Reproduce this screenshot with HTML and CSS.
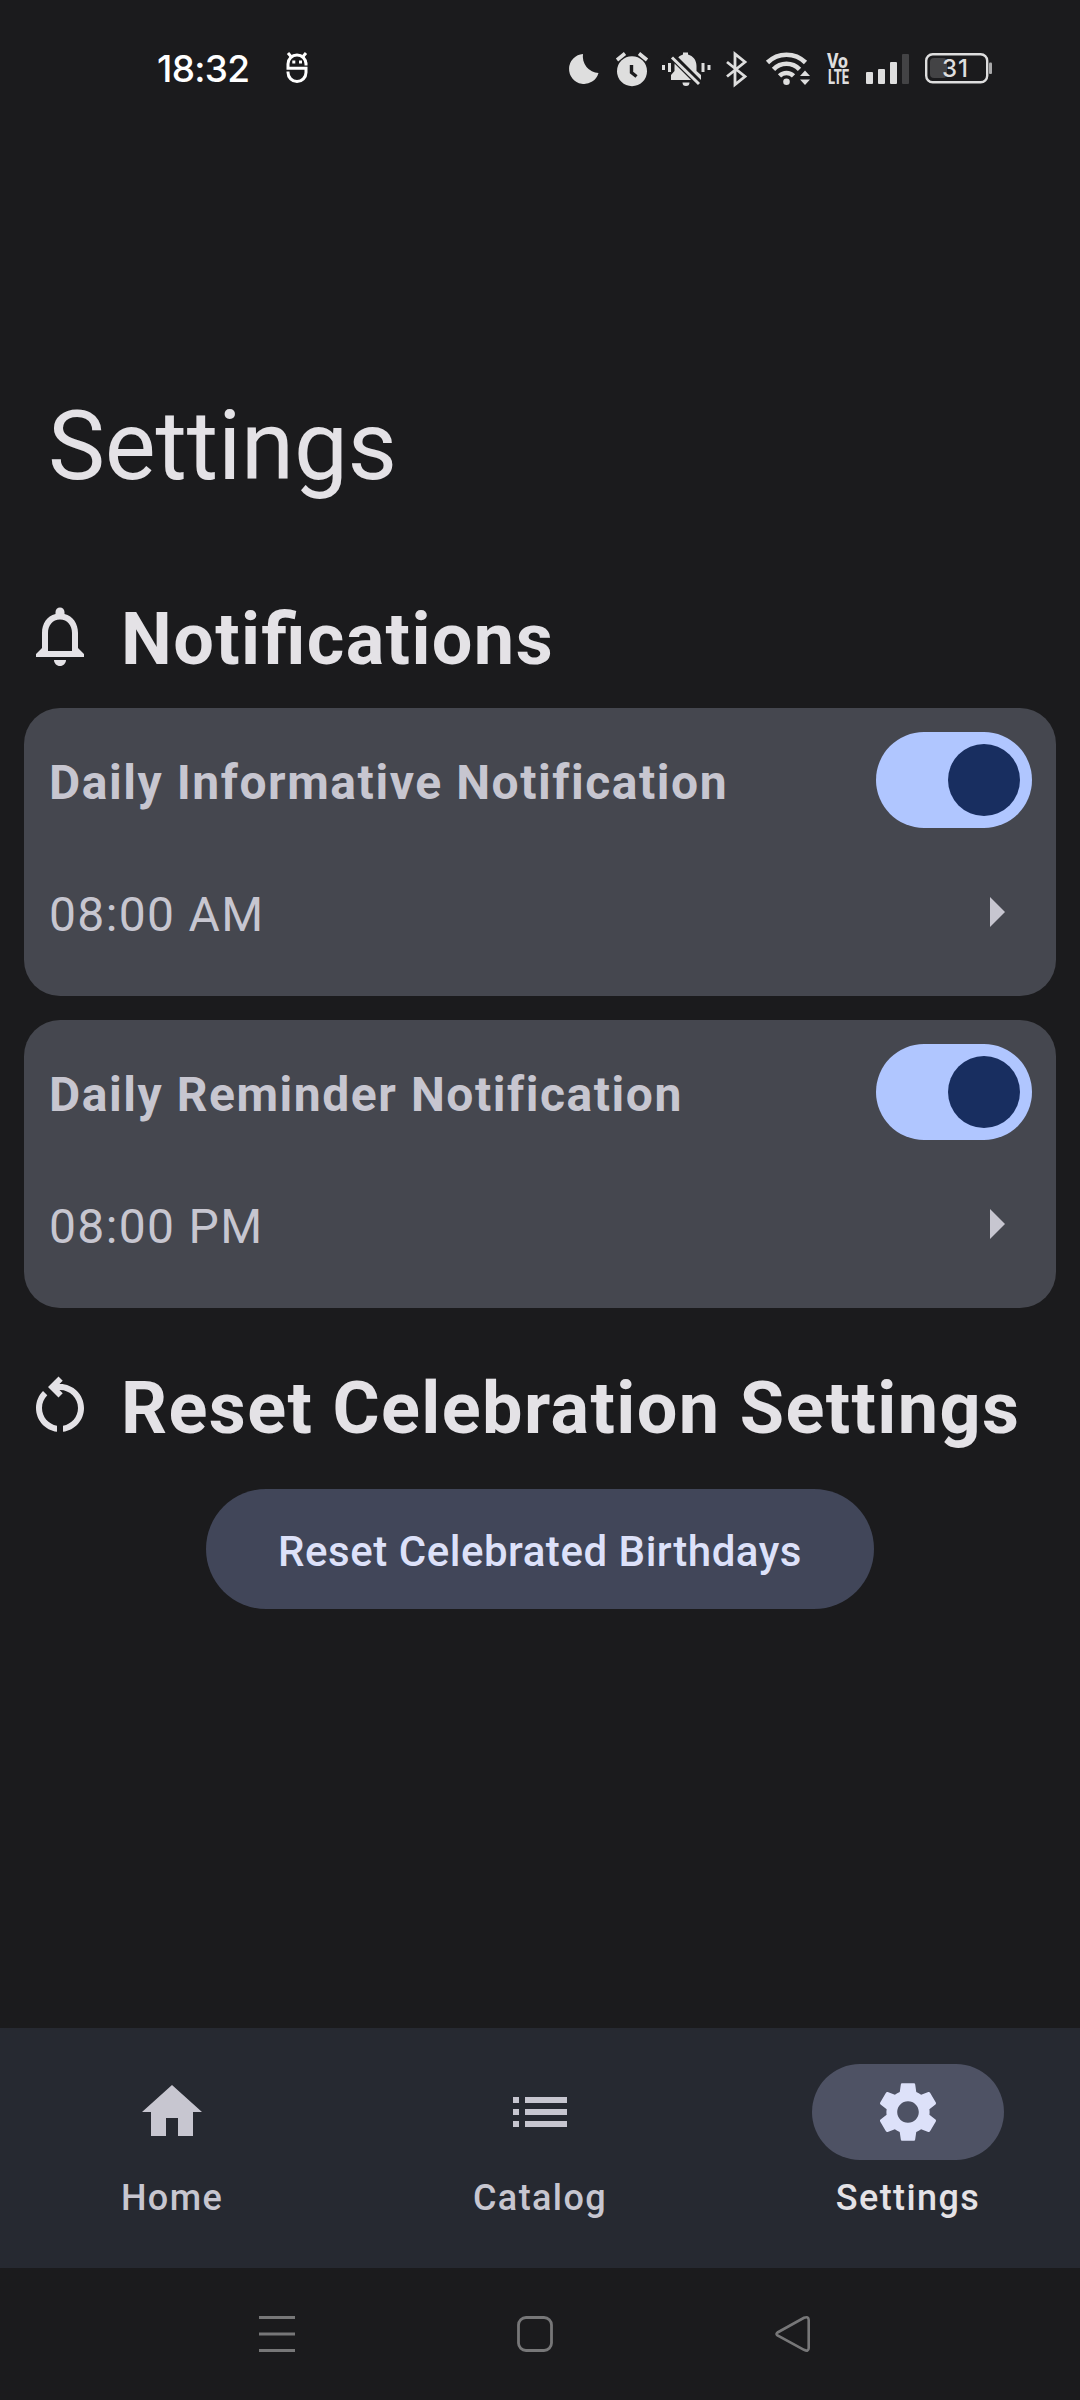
FILE: index.html
```html
<!DOCTYPE html>
<html lang="en">
<head>
<meta charset="utf-8">
<title>Settings</title>
<link rel="stylesheet" href="styles.css">
</head>
<body>
<div class="screen">
  <header class="status-bar">
    <span class="clock">18:32</span>
    <svg class="status-app" width="24" height="36" viewBox="285 51 24 36" fill="none" stroke="#fff" stroke-width="3">
      <path d="M307.500 65H306a9 9 0 0 0-18 0v4.300h18V73.500a9 9 0 0 1-18 0v-1"/>
      <path d="M288 54l3 3.500M306 54l-3 3.500"/>
      <path d="M292.300 63h3M299 63h3" stroke-width="2.800"/>
    </svg>
    <div class="status-icons">
      <svg width="30" height="40" viewBox="569 48 30 40"><path fill="#dedede" d="M583 54a16.500 16.500 0 0 0 15.500 19A15 15 0 1 1 583 54z"/></svg>
      <svg class="alarm" width="34" height="40" viewBox="615 48 34 40"><circle cx="632" cy="71.200" r="15" fill="#dedede"/><path d="M617 60l8-6.500M647 60l-8-6.500" stroke="#dedede" stroke-width="3.600"/><path d="M631.500 65v7.500l5 4" fill="none" stroke="#1b1b1d" stroke-width="3.400"/></svg>
      <svg class="silent" width="50" height="40" viewBox="661 48 50 40" fill="#dedede"><path d="M671 80v-5l3.500-4V66c0-6 4-10 8.500-11.500V52.500h5v2c5 1.500 8.500 5.500 8.500 11.500v5l4.500 4v5zM682.500 82.500h7a3.500 3.500 0 0 1-7 0z"/><path d="M670 54l30 30" stroke="#1b1b1d" stroke-width="7"/><path d="M672 57.500L699 84" stroke="#dedede" stroke-width="3"/><path d="M662 65h3v5h-3zM668 63h3v9h-3zM701.500 63h3v9h-3zM707.500 65h3v5h-3z"/></svg>
      <svg class="bluetooth" width="24" height="40" viewBox="725 48 24 40" fill="none" stroke="#dedede" stroke-width="2.800"><path d="M727 62l18 14.500-10 8V54l10 8L727 76.500"/></svg>
      <svg class="wifi" width="46" height="40" viewBox="765 48 46 40"><g fill="none" stroke="#dedede" stroke-width="4.600"><path d="M767.500 62.500a27 27 0 0 1 38 0"/><path d="M773.500 69.300a18 18 0 0 1 26 0"/><path d="M779.500 75.800a10 10 0 0 1 14 0"/></g><circle cx="786.500" cy="81.700" r="3.300" fill="#dedede"/><path fill="#dedede" d="M800 76l5-5.500 5 5.500zM800 79.500h10l-5 5.500z"/></svg>
      <svg class="volte" width="24" height="40" viewBox="826 48 24 40"><text x="827" y="68" textLength="21" lengthAdjust="spacingAndGlyphs">Vo</text><text x="828" y="84" textLength="21" lengthAdjust="spacingAndGlyphs">LTE</text></svg>
      <svg class="signal" width="44" height="40" viewBox="866 48 44 40" fill="#dedede"><rect x="866" y="72" width="7" height="12" rx="1"/><rect x="878" y="69" width="7" height="15" rx="1"/><rect x="890" y="62" width="7" height="22" rx="1"/><rect x="902" y="54" width="7" height="30" rx="1" fill="#434345"/></svg>
      <svg class="battery" width="68" height="40" viewBox="925 48 68 40"><rect x="926.200" y="54.200" width="61" height="28" rx="6.500" fill="none" stroke="#dedede" stroke-width="2.400"/><rect x="930" y="58" width="17" height="20" rx="4" fill="#434345"/><rect x="989" y="62.500" width="3" height="11.500" rx="1" fill="#a9a9aa"/><text x="942" y="77" textLength="26">31</text></svg>
    </div>
  </header>

  <main class="content">
    <h1 class="title">Settings</h1>

    <h2 class="section section-notifications">
      <svg width="72" height="72" viewBox="0 0 24 24"><path fill="currentColor" fill-rule="evenodd" d="M12 22c1.100 0 2-.9 2-2h-4c0 1.100.89 2 2 2zM18 16v-5c0-3.070-1.640-5.640-4.500-6.320V4c0-.83-.67-1.500-1.500-1.500s-1.500.67-1.500 1.500v.68C7.630 5.360 6 7.920 6 11v5l-2 2v1h16v-1l-2-2zM16 17H8v-6c0-2.480 1.510-4.500 4-4.500s4 2.020 4 4.500v6z"/></svg>
      <span class="section-name">Notifications</span>
    </h2>

    <section class="card">
      <div class="card-row">
        <span class="card-name">Daily Informative Notification</span>
        <span class="switch"><span class="thumb"></span></span>
      </div>
      <div class="card-row time-row">
        <span class="time">08:00 AM</span>
        <svg width="72" height="72" viewBox="0 0 24 24"><path fill="currentColor" d="M10 17l5-5-5-5v10z"/></svg>
      </div>
    </section>

    <section class="card">
      <div class="card-row">
        <span class="card-name">Daily Reminder Notification</span>
        <span class="switch"><span class="thumb"></span></span>
      </div>
      <div class="card-row time-row">
        <span class="time">08:00 PM</span>
        <svg width="72" height="72" viewBox="0 0 24 24"><path fill="currentColor" d="M10 17l5-5-5-5v10z"/></svg>
      </div>
    </section>

    <h2 class="section section-reset">
      <svg width="72" height="72" viewBox="0 0 24 24"><path fill="currentColor" d="M6 13c0-1.650.67-3.150 1.760-4.240L6.340 7.340C4.900 8.790 4 10.790 4 13c0 4.080 3.050 7.440 7 7.930v-2.020c-2.830-.48-5-2.940-5-5.910zm14 0c0-4.420-3.580-8-8-8-.06 0-.12.01-.18.01l1.090-1.090L11.500 2.500 8 6l3.500 3.500 1.410-1.410-1.080-1.080c.06 0 .12-.01.17-.01 3.310 0 6 2.690 6 6 0 2.970-2.170 5.430-5 5.910v2.020c3.950-.49 7-3.850 7-7.930z"/></svg>
      <span class="section-name">Reset Celebration Settings</span>
    </h2>

    <button class="reset-button" type="button">Reset Celebrated Birthdays</button>
  </main>

  <nav class="tabs">
    <a class="tab">
      <span class="indicator"><svg width="72" height="72" viewBox="0 0 24 24"><path fill="currentColor" d="M10 20v-6h4v6h5v-8h3L12 3 2 12h3v8z"/></svg></span>
      <span>Home</span>
    </a>
    <a class="tab">
      <span class="indicator"><svg width="72" height="72" viewBox="0 0 24 24"><path fill="currentColor" d="M3 13h2v-2H3v2zm0 4h2v-2H3v2zm0-8h2V7H3v2zm4 4h14v-2H7v2zm0 4h14v-2H7v2zM7 7v2h14V7H7z"/></svg></span>
      <span>Catalog</span>
    </a>
    <a class="tab selected">
      <span class="indicator"><svg width="72" height="72" viewBox="0 0 24 24"><path fill="currentColor" d="M19.140 12.940c.04-.3.06-.61.06-.94 0-.32-.02-.64-.07-.94l2.030-1.580c.18-.14.23-.41.12-.61l-1.920-3.320c-.12-.22-.37-.29-.59-.22l-2.390.96c-.5-.38-1.030-.7-1.620-.94l-.36-2.540c-.04-.24-.24-.41-.48-.41h-3.840c-.24 0-.43.17-.47.41l-.36 2.540c-.59.24-1.130.57-1.620.94l-2.390-.96c-.22-.08-.47 0-.59.22L2.740 8.870c-.12.21-.08.47.12.61l2.030 1.580c-.05.3-.09.63-.09.94s.02.64.07.94l-2.030 1.580c-.18.14-.23.41-.12.61l1.920 3.320c.12.22.37.29.59.22l2.390-.96c.5.38 1.030.7 1.620.94l.36 2.540c.05.24.24.41.48.41h3.840c.24 0 .44-.17.47-.41l.36-2.540c.59-.24 1.130-.56 1.620-.94l2.390.96c.22.08.47 0 .59-.22l1.920-3.320c.12-.22.07-.47-.12-.61l-2.010-1.580zM12 15.600c-1.980 0-3.600-1.620-3.600-3.600s1.620-3.600 3.600-3.600 3.600 1.620 3.600 3.600-1.620 3.600-3.600 3.600z"/></svg></span>
      <span>Settings</span>
    </a>
  </nav>

  <footer class="system-nav">
    <svg width="36" height="38" viewBox="0 0 36 38" stroke="#777778" stroke-width="3"><path d="M0 2.500h36M0 19h36M0 35.500h36"/></svg>
    <svg width="36" height="38" viewBox="0 0 36 38" fill="none" stroke="#777778" stroke-width="2.800"><rect x="1.500" y="2.500" width="33" height="33" rx="7.500"/></svg>
    <svg width="36" height="38" viewBox="0 0 36 38" fill="none" stroke="#777778" stroke-width="2.600"><path d="M2.500 17.500L29 2.800Q33.700 1 33.700 5v28Q33.700 37 29 34.800L2.500 20.500Q0.500 19 2.500 17.500z"/></svg>
  </footer>
</div>
</body>
</html>
```
FILE: styles.css
```css
* {
  box-sizing: border-box;
}

body {
  margin: 0;
  background: #1b1b1d;
  color: #e4e2e6;
  font-family: Roboto, sans-serif;
}

svg {
  display: block;
  flex: none;
  overflow: visible;
}

.screen {
  display: flex;
  flex-direction: column;
  width: 1080px;
  height: 2400px;
  overflow: hidden;
}

.status-bar {
  display: flex;
  align-items: center;
  height: 136px;
  padding: 0 87px 0 157px;
}

.clock {
  width: 94px;
  padding-top: 2px;
  color: #fff;
  font: 500 37px/44px Inter, sans-serif;
  letter-spacing: -0.7px;
  white-space: nowrap;
}

.status-app {
  margin-left: 34px;
}

.status-icons {
  display: flex;
  align-items: center;
  margin-left: auto;
}

.alarm { margin-left: 16px; }
.silent { margin-left: 12px; }
.bluetooth { margin-left: 14px; }
.wifi { margin-left: 16px; }
.volte { margin-left: 15px; }
.signal { margin-left: 16px; }
.battery { margin-left: 15px; }

.volte text {
  fill: #dedede;
  font: 800 20px Roboto, sans-serif;
}

.battery text {
  fill: #dedede;
  font: 500 24px Inter, sans-serif;
}

.content {
  display: flex;
  flex-direction: column;
  flex: 1;
  padding: 250px 24px 0;
}

.title {
  margin: 0;
  padding-left: 24px;
  font-size: 96px;
  font-weight: 400;
  line-height: 120px;
  letter-spacing: -0.2px;
}

.section {
  display: flex;
  align-items: center;
  gap: 25px;
  height: 96px;
  margin: 0;
  font-size: 72px;
  font-weight: 700;
  letter-spacing: 1.4px;
  font-feature-settings: "liga" 1;
  white-space: nowrap;
}

.section-name {
  padding-top: 6px;
}

.section-notifications {
  margin: 82px 0 24px;
}

.section-reset {
  margin: 25px 0 36px;
}

.card {
  height: 288px;
  margin-bottom: 24px;
  padding: 24px 24px 0 25px;
  border-radius: 36px;
  background: #45474f;
  color: #c7c6d0;
  font-size: 48px;
  letter-spacing: 1.5px;
}

.card-row {
  display: flex;
  align-items: center;
  justify-content: space-between;
  height: 96px;
}

.card-name {
  padding-top: 4px;
  font-weight: 700;
  letter-spacing: 1.55px;
}

.time {
  padding-top: 4px;
  letter-spacing: 1.35px;
}

.time-row {
  margin-top: 36px;
}

.switch {
  display: flex;
  justify-content: flex-end;
  width: 156px;
  height: 96px;
  padding: 12px;
  border-radius: 48px;
  background: #b0c6ff;
}

.thumb {
  width: 72px;
  height: 72px;
  border-radius: 50%;
  background: #182e60;
}

.reset-button {
  align-self: center;
  height: 120px;
  padding: 5px 72px 0;
  border: 0;
  border-radius: 60px;
  background: #414659;
  color: #dde1f9;
  font: 500 42px/60px Roboto, sans-serif;
  letter-spacing: 0.53px;
}

.tabs {
  display: flex;
  gap: 24px;
  height: 240px;
  padding-top: 36px;
  background: #262931;
}

.tab {
  display: flex;
  flex: 1;
  flex-direction: column;
  align-items: center;
  gap: 14px;
  color: #c7c6d0;
  font-size: 36px;
  font-weight: 500;
  line-height: 48px;
  letter-spacing: 1.4px;
}

.indicator {
  display: flex;
  align-items: center;
  justify-content: center;
  width: 192px;
  height: 96px;
  border-radius: 48px;
}

.selected {
  color: #e4e2e6;
}

.selected .indicator {
  background: #4e5264;
  color: #dde1f9;
}

.system-nav {
  display: flex;
  align-items: center;
  justify-content: space-between;
  height: 132px;
  padding: 0 269px 0 259px;
}
```
